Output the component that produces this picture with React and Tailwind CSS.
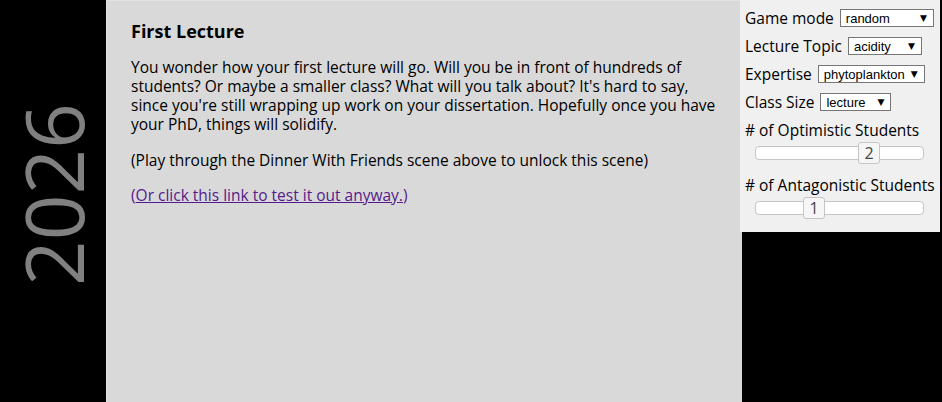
import React from "react";

function FakeSelect({ value, width }) {
  return (
    <div
      className="flex h-[18px] items-center justify-between border border-[#767676] bg-white pl-[5px] pr-[6px] text-[13px] leading-none text-black"
      style={{ width }}
    >
      <span className="font-['Liberation_Sans',Arial,sans-serif]">{value}</span>
      <span className="text-[9px] font-['DejaVu_Sans',sans-serif]">▼</span>
    </div>
  );
}

function Slider({ value, pos }) {
  return (
    <div className="relative ml-[10px] mr-[16px] mt-[5px] h-[14px] rounded-[4px] border border-[#c5c5c5] bg-white">
      <div
        className="absolute top-[-5px] flex h-[22px] w-[22px] items-center justify-center rounded-[3px] border border-[#c5c5c5] bg-[#f6f6f6] text-[16px] leading-none text-[#454545]"
        style={{ left: pos }}
      >
        {value}
      </div>
    </div>
  );
}

export default function App() {
  return (
    <div className="flex h-screen w-full overflow-hidden bg-black font-['Open_Sans',sans-serif]">
      <div className="flex w-[106px] shrink-0 items-center justify-center pb-[14px]">
        <div className="rotate-180 text-[80px] leading-[80px] text-[#808080] [writing-mode:vertical-rl] font-['Open_Sans',sans-serif]">
          2026
        </div>
      </div>
      <div className="w-[636px] shrink-0 border-l border-t border-[#e2e2e2] bg-[#d9d9d9] pl-[24px] pr-[24px] pt-[17px] text-[15.5px] leading-[19px] text-black">
        <h1 className="text-[18px] font-bold leading-[26px]">First Lecture</h1>
        <p className="mt-[14px]">
          You wonder how your first lecture will go. Will you be in front of hundreds of students? Or maybe a smaller class? What will you talk about? It's hard to say, since you're still wrapping up work on your dissertation. Hopefully once you have your PhD, things will solidify.
        </p>
        <p className="mt-[17px]">(Play through the Dinner With Friends scene above to unlock this scene)</p>
        <p className="mt-[16px] text-[#551a8b]">
          (<a href="#" className="text-[#551a8b] underline">Or click this link to test it out anyway.</a>)
        </p>
      </div>
      <div className="ml-[-2px] h-[232px] w-[200px] shrink-0 bg-[#f0f0f0] pl-[5px] pt-[7px] text-[15.5px] leading-[22px] text-black">
        <div className="flex items-center gap-[6px]">
          <span>Game mode</span>
          <FakeSelect value="random" width={94} />
        </div>
        <div className="mt-[6px] flex items-center gap-[6px]">
          <span>Lecture Topic</span>
          <FakeSelect value="acidity" width={74} />
        </div>
        <div className="mt-[6px] flex items-center gap-[6px]">
          <span>Expertise</span>
          <FakeSelect value="phytoplankton" width={107} />
        </div>
        <div className="mt-[6px] flex items-center gap-[6px]">
          <span>Class Size</span>
          <FakeSelect value="lecture" width={71} />
        </div>
        <div className="mt-[6px]">
          <div className="whitespace-nowrap"># of Optimistic Students</div>
          <Slider value="2" pos={102} />
        </div>
        <div className="mt-[14px]">
          <div className="whitespace-nowrap"># of Antagonistic Students</div>
          <Slider value="1" pos={47} />
        </div>
      </div>
    </div>
  );
}
